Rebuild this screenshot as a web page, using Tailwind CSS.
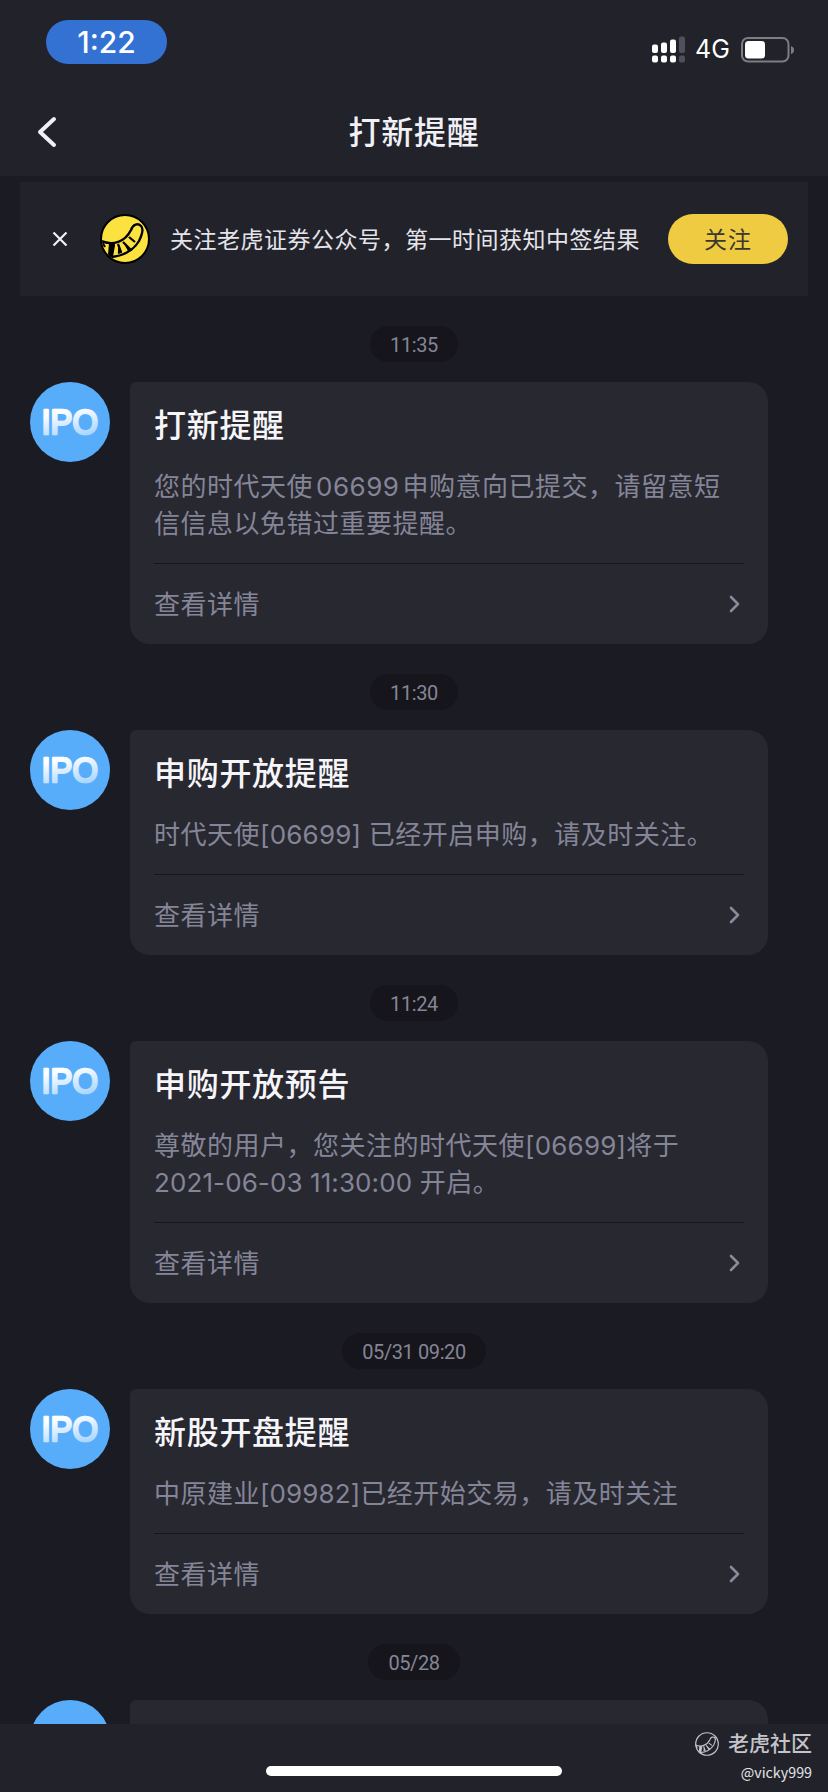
<!DOCTYPE html>
<html lang="zh-CN">
<head>
<meta charset="utf-8">
<title>打新提醒</title>
<script src="https://cdn.jsdelivr.net/npm/@tailwindcss/browser@4"></script>
</head>
<body class="bg-[#1b1b23]">
<svg class="hidden">
  <symbol id="chev" viewBox="0 0 12 18"><path d="M2 2 L9 9 L2 16" fill="none" stroke="#8a8a9c" stroke-width="2.6" stroke-linecap="round" stroke-linejoin="round"/></symbol>
  <symbol id="tail" viewBox="0 0 50 50">
    <path d="M1 27 C13 32 25 28 31 16 C33 10 38 9 41 12 C44 15 42 21 39 27 C33 37 23 42 10 43" fill="none" stroke="currentColor" stroke-width="2.4" stroke-linecap="round"/>
    <path d="M2 28 L5 33 M10 30 L14 31 L12 42 L9 42 Z M18 30 L21 38 L18 39 M23 28 L31 36 L28 37 M29 23 L35 28" fill="currentColor" stroke="currentColor" stroke-width="2.2" stroke-linejoin="round"/>
  </symbol>
</svg>
<div class="flex flex-col w-[828px] h-[1792px] overflow-hidden bg-[#1b1b23] font-['Inter','Noto_Sans_CJK_SC',sans-serif]">
  <header class="h-[176px] shrink-0 bg-[#22222a] flex flex-col">
    <div class="h-[88px] flex items-start justify-between pl-[46px] pr-[33px] pt-5">
      <div class="w-[121px] h-11 rounded-[22px] bg-[#3371d3] text-white text-[30px] leading-[45px] font-medium text-center">1:22</div>
      <div class="flex items-center pt-[13px]">
        <svg class="w-[34px] h-7" viewBox="0 0 34 28"><g fill="#fff"><rect x="0" y="9.500" width="6" height="8.500" rx="2"/><rect x="9" y="7.500" width="6" height="10.500" rx="2"/><rect x="18" y="4.500" width="6" height="13.500" rx="2"/><rect x="0" y="20.500" width="6" height="7" rx="2"/><rect x="9" y="20.500" width="6" height="7" rx="2"/><rect x="18" y="20.500" width="6" height="7" rx="2"/></g><g fill="#50505a"><rect x="27" y="1.500" width="6" height="16.500" rx="2"/><rect x="27" y="20.500" width="6" height="7" rx="2"/></g></svg>
        <span class="w-[36px] ml-[9px] text-white text-[25px] leading-8">4G</span>
        <svg class="w-[54px] h-7 ml-[10px]" viewBox="0 0 54 28"><rect x="1" y="3" width="46.500" height="23.500" rx="6" fill="none" stroke="#7d7d83" stroke-width="2"/><rect x="4" y="6" width="20" height="17.500" rx="3.500" fill="#fff"/><path d="M50 11 Q53 12 53 15 Q53 18 50 19Z" fill="#7d7d83"/></svg>
      </div>
    </div>
    <div class="h-[88px] grid grid-cols-[100px_1fr_100px] items-center">
      <svg class="w-6 h-8 ml-9" viewBox="0 0 24 32"><path d="M18 3 L4 16 L18 29" fill="none" stroke="#f0f0f6" stroke-width="4" stroke-linecap="round" stroke-linejoin="round"/></svg>
      <h1 class="pt-[2px] text-center text-[32px] leading-[44px] font-medium tracking-[0.7px] text-[#f0f0f6]">打新提醒</h1>
    </div>
  </header>
  <section class="mt-[6px] ml-5 mr-5 h-[114px] shrink-0 bg-[#22222a] flex items-center pl-8 pr-5">
    <svg class="w-4 h-4 shrink-0" viewBox="0 0 16 16"><path d="M1.500 1.500 L14.500 14.500 M14.500 1.500 L1.500 14.500" stroke="#f0f0f6" stroke-width="2.200"/></svg>
    <div class="w-[50px] h-[50px] ml-8 shrink-0 rounded-full bg-[#fbe23f] border-2 border-black overflow-hidden"><svg class="w-[50px] h-[50px] -m-[2px] text-black"><use href="#tail"/></svg></div>
    <span class="ml-5 pt-[2px] grow whitespace-nowrap text-[23px] tracking-[0.5px] text-[#e4e4ea]">关注老虎证券公众号，第一时间获知中签结果</span>
    <button class="w-[120px] h-[50px] shrink-0 rounded-[25px] bg-[#efcb41] pt-[2px] text-[23px] tracking-[1px] text-[#3a372f]">关注</button>
  </section>
  <main class="grow min-h-0 overflow-hidden pt-[30px]" id="list"></main>
  <footer class="h-[68px] shrink-0 bg-[#22222a] grid grid-cols-[266px_296px_1fr]">
    <div></div>
    <div class="h-[10px] mt-[42px] rounded-full bg-white"></div>
    <div class="flex flex-col items-end pr-4 pt-[6px]">
      <div class="flex items-center h-7 text-[#c4c4ca]"><svg class="w-6 h-6 mr-[9px]" viewBox="0 0 50 50"><circle cx="25" cy="25" r="23.500" fill="none" stroke="currentColor" stroke-width="2.400"/><use href="#tail"/></svg><span class="text-[21px] leading-7 font-medium">老虎社区</span></div>
      <div class="text-[14.3px] leading-[27px] text-[#e2e2e6] font-['Noto_Sans_CJK_SC',sans-serif]">@vicky999</div>
    </div>
  </footer>
</div>
<template id="row">
  <div>
    <div class="flex justify-center"><time class="h-9 min-w-[88px] px-5 rounded-full bg-[#15151b] text-center text-[20px] leading-[38px] text-[#858596] font-['Roboto',sans-serif] tracking-[-0.4px]"></time></div>
    <article class="flex items-start mt-5 mb-[30px] ml-[30px]">
      <svg class="w-20 h-20 shrink-0" viewBox="0 0 80 80"><defs><linearGradient id="ipo" x1="0" y1="0" x2="0.300" y2="1"><stop offset="0.300" stop-color="#fff"/><stop offset="1" stop-color="#a9d5ff"/></linearGradient></defs><circle cx="40" cy="40" r="40" fill="#58adfb"/><text x="11.500" y="52" textLength="56.500" lengthAdjust="spacingAndGlyphs" fill="url(#ipo)" stroke="url(#ipo)" stroke-width="2.600" stroke-linejoin="round" font-family="Liberation Sans, sans-serif" font-size="34.500">IPO</text></svg>
      <div class="card ml-5 w-[638px] min-h-20 rounded-[20px] rounded-tl-[6px] bg-[#282830] px-6">
        <h2 class="pt-[21px] h-[86px] text-[32px] leading-[46px] font-medium tracking-[0.7px] text-[#f6f6fa]"></h2>
        <p class="body whitespace-nowrap text-[26px] leading-[37px] tracking-[0.5px] text-[#858598]"></p>
        <div class="mt-[21px] border-t border-[#15151b] h-[81px] flex items-center justify-between text-[26px] tracking-[0.5px] text-[#858598]"><span>查看详情</span><svg class="w-3 h-[18px] mr-[3px]"><use href="#chev"/></svg></div>
      </div>
    </article>
  </div>
</template>
<script>
const items = [
  ['11:35', '打新提醒', '您的时代天使<span class="mx-[3px]">06699</span>申购意向已提交，请留意短<br>信信息以免错过重要提醒。'],
  ['11:30', '申购开放提醒', '时代天使<span class="tracking-[0.2px]">[06699] </span>已经开启申购，请及时关注。'],
  ['11:24', '申购开放预告', '尊敬的用户，您关注的时代天使<span class="tracking-[0.2px]">[06699]</span>将于<br><span class="tracking-[0.1px]">2021-06-03 11:30:00 </span>开启。'],
  ['05/31 09:20', '新股开盘提醒', '中原建业<span class="tracking-[0.1px]">[09982]</span>已经开始交易，请及时关注'],
  ['05/28', '', '']
];
for (const [time, title, body] of items) {
  const n = document.getElementById('row').content.cloneNode(true);
  n.querySelector('time').textContent = time;
  if (title) {
    n.querySelector('h2').textContent = title;
    n.querySelector('.body').innerHTML = body;
  } else {
    n.querySelector('.card').replaceChildren();
    n.querySelector('text').remove();
  }
  document.getElementById('list').append(n);
}
</script>
</body>
</html>
